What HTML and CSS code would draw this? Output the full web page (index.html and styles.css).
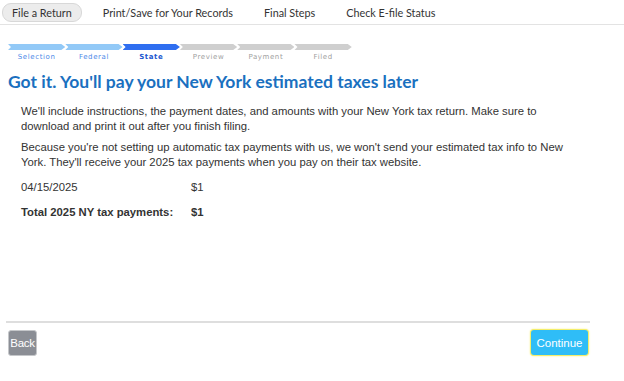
FILE: index.html
```html
<!DOCTYPE html>
<html>
<head>
<meta charset="utf-8">
<link rel="stylesheet" href="styles.css">
</head>
<body>
<nav class="topnav">
  <span class="tab active">File a Return</span>
  <span class="tab">Print/Save for Your Records</span>
  <span class="tab">Final Steps</span>
  <span class="tab">Check E-file Status</span>
</nav>
<div class="stepper">
  <div class="step done"><div class="bar"></div><div class="lbl">Selection</div></div>
  <div class="step done"><div class="bar"></div><div class="lbl">Federal</div></div>
  <div class="step current"><div class="bar"></div><div class="lbl">State</div></div>
  <div class="step"><div class="bar"></div><div class="lbl">Preview</div></div>
  <div class="step"><div class="bar"></div><div class="lbl">Payment</div></div>
  <div class="step"><div class="bar"></div><div class="lbl">Filed</div></div>
</div>
<h1 class="title">Got it. You'll pay your New York estimated taxes later</h1>
<main class="content">
  <p>We'll include instructions, the payment dates, and amounts with your New York tax return. Make sure to download and print it out after you finish filing.</p>
  <p>Because you're not setting up automatic tax payments with us, we won't send your estimated tax info to New York. They'll receive your 2025 tax payments when you pay on their tax website.</p>
  <div class="row"><span class="k">04/15/2025</span><span>$1</span></div>
  <div class="row total"><span class="k">Total 2025 NY tax payments:</span><span>$1</span></div>
</main>
<footer class="footer">
  <button class="btn back">Back</button>
  <button class="btn cont">Continue</button>
</footer>
</body>
</html>
```
FILE: styles.css
```css
html, body { margin: 0; padding: 0; background: #fff; }
body { width: 624px; height: 381px; overflow: hidden; font-family: "Liberation Sans", Arial, sans-serif; color: #333; }

.topnav {
  display: flex;
  align-items: center;
  height: 24px;
  padding-left: 2px;
  border-bottom: 1px solid #e3e3e3;
  font-family: Lato, "Open Sans", sans-serif;
  font-size: 10.8px;
  color: #333;
}
.tab { line-height: 17px; }
.tab.active { background: #ececec; border: 1px solid #d8d8d8; border-radius: 9px; padding: 0 9px; margin-right: 21px; }
.tab + .tab { margin-right: 31px; }

.stepper { display: flex; padding: 19px 0 0 8px; }
.step { width: 57.3px; display: flex; flex-direction: column; align-items: center; }
.bar {
  width: 100%; height: 6px; background: #cfcfcf;
  clip-path: polygon(0 0, calc(100% - 4px) 0, 100% 50%, calc(100% - 4px) 100%, 0 100%, 3px 50%);
}
.step.done .bar { background: #92c9f7; }
.step.current .bar { background: #2f6ef0; }
.lbl { font-family: "DejaVu Sans", Verdana, sans-serif; font-size: 7px; letter-spacing: 0.6px; color: #a0a0a0; margin-top: 3px; }
.step.done .lbl { color: #4d8ae8; }
.step.current .lbl { color: #2157cf; font-weight: bold; }

.title {
  margin: 10px 0 0 8px;
  font-family: Lato, "Open Sans", sans-serif;
  font-weight: bold;
  font-size: 17.5px;
  color: #1a70bf;
  line-height: 22px;
}
.content { padding: 11px 0 0 21px; font-size: 11.3px; line-height: 15px; color: #333; }
.content p { margin: 0 0 6px; width: 560px; }
.row { display: flex; margin-top: 10px; }
.row .k { width: 170px; }
.row.total { font-weight: bold; margin-top: 10px; }

.footer {
  position: absolute; left: 6px; top: 321px; width: 584px;
  border-top: 2px solid #dedede;
  display: flex; justify-content: space-between; align-items: flex-start;
  padding-top: 7px;
}
.btn { font-family: "Liberation Sans", Arial, sans-serif; font-size: 11.5px; color: #fff; border: none; border-radius: 3px; }
.back { background: #8b8e95; width: 29px; height: 26px; margin-left: 2px; padding: 0; border: 1px solid #c5c7ca; letter-spacing: -0.3px; }
.cont { background: #2fbdf7; width: 57px; height: 25px; margin-right: 2px; padding: 0; box-shadow: 0 0 0 1px #f4ee6a, 0 0 2px 1px #f7f08a; }
```
